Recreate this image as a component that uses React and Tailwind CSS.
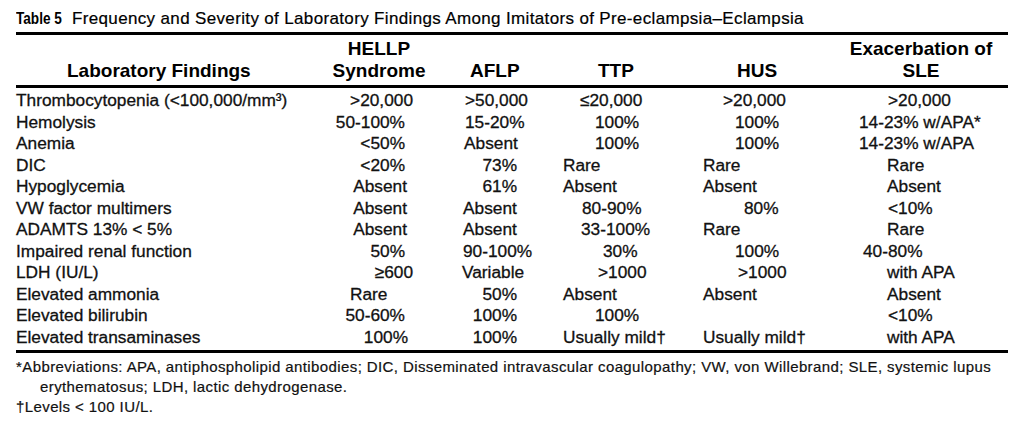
import React from 'react';

const cols = 'grid grid-cols-[314px_125px_100px_140px_150px_157px]';

const rows = [
  ['Thrombocytopenia (<100,000/mm³)',
    ['>20,000', 'text-right pr-[42px]'], ['>50,000', 'pl-[10px]'], ['≤20,000', 'pl-[25px]'], ['>20,000', 'pl-[28px]'], ['>20,000', 'pl-[43px]']],
  ['Hemolysis',
    ['50-100%', 'text-right pr-[50px]'], ['15-20%', 'pl-[10px]'], ['100%', 'pl-[40px]'], ['100%', 'pl-[40px]'], ['14-23% w/APA*', 'pl-[14px]']],
  ['Anemia',
    ['<50%', 'text-right pr-[50px]'], ['Absent', 'pl-[9px]'], ['100%', 'pl-[40px]'], ['100%', 'pl-[40px]'], ['14-23% w/APA', 'pl-[14px]']],
  ['DIC',
    ['<20%', 'text-right pr-[50px]'], ['73%', 'text-right pr-[38px]'], ['Rare', 'pl-[8px]'], ['Rare', 'pl-[8px]'], ['Rare', 'pl-[42px]']],
  ['Hypoglycemia',
    ['Absent', 'text-right pr-[48px]'], ['61%', 'text-right pr-[38px]'], ['Absent', 'pl-[8px]'], ['Absent', 'pl-[8px]'], ['Absent', 'pl-[42px]']],
  ['VW factor multimers',
    ['Absent', 'text-right pr-[48px]'], ['Absent', 'pl-[8px]'], ['80-90%', 'pl-[27px]'], ['80%', 'pl-[49px]'], ['<10%', 'pl-[43px]']],
  ['ADAMTS 13% < 5%',
    ['Absent', 'text-right pr-[48px]'], ['Absent', 'pl-[8px]'], ['33-100%', 'pl-[26px]'], ['Rare', 'pl-[8px]'], ['Rare', 'pl-[42px]']],
  ['Impaired renal function',
    ['50%', 'text-right pr-[50px]'], ['90-100%', 'pl-[8px]'], ['30%', 'pl-[48px]'], ['100%', 'pl-[40px]'], ['40-80%', 'pl-[18px]']],
  ['LDH (IU/L)',
    ['≥600', 'text-right pr-[42px]'], ['Variable', 'pl-[7px]'], ['>1000', 'pl-[43px]'], ['>1000', 'pl-[43px]'], ['with APA', 'pl-[42px]']],
  ['Elevated ammonia',
    ['Rare', 'pl-[20px]'], ['50%', 'text-right pr-[38px]'], ['Absent', 'pl-[8px]'], ['Absent', 'pl-[8px]'], ['Absent', 'pl-[42px]']],
  ['Elevated bilirubin',
    ['50-60%', 'text-right pr-[50px]'], ['100%', 'text-right pr-[38px]'], ['100%', 'pl-[40px]'], ['', ''], ['<10%', 'pl-[43px]']],
  ['Elevated transaminases',
    ['100%', 'text-right pr-[47px]'], ['100%', 'text-right pr-[38px]'], ['Usually mild†', 'pl-[8px]'], ['Usually mild†', 'pl-[8px]'], ['with APA', 'pl-[42px]']],
];

export default function App() {
  return (
    <div className="w-[1024px] h-[422px] bg-white text-black px-[16px] pt-[9px] font-['Liberation_Sans',Arial,sans-serif] overflow-hidden">
      <div className="flex items-baseline h-[20px] leading-[20px] whitespace-nowrap">
        <span className="inline-block w-[56px] shrink-0 font-bold text-[17px]">
          <span className="inline-block origin-left scale-x-[0.8]">Table 5</span>
        </span>
        <span className="text-[17px] tracking-[0.35px] [-webkit-text-stroke:0.2px_#000]">
          Frequency and Severity of Laboratory Findings Among Imitators of Pre-eclampsia–Eclampsia
        </span>
      </div>

      <div className="mt-[3px] h-[3px] bg-black" />

      <div className={`${cols} items-end pt-[3px] pb-[3px] text-[19px] font-bold leading-[22px] whitespace-nowrap`}>
        <div className="pl-[51px]">Laboratory Findings</div>
        <div className="text-center pr-[27px]">HELLP<br />Syndrome</div>
        <div className="pl-[15px]">AFLP</div>
        <div className="pl-[43px]">TTP</div>
        <div className="pl-[42px]">HUS</div>
        <div className="text-center pr-[5px]">Exacerbation of<br />SLE</div>
      </div>

      <div className="h-[3px] bg-black" />

      <div className="pt-[2px] pb-[2px] text-[17.3px] leading-[21.5px] text-[#111] whitespace-nowrap [-webkit-text-stroke:0.3px_#111]">
        {rows.map(([label, ...cells]) => (
          <div key={label} className={cols}>
            <div>{label}</div>
            {cells.map(([text, cls], i) => (
              <div key={i} className={cls}>{text}</div>
            ))}
          </div>
        ))}
      </div>

      <div className="h-[3px] bg-black" />

      <div className="pt-[4px] text-[15px] tracking-[0.4px] leading-[20px] text-[#111] whitespace-nowrap [-webkit-text-stroke:0.2px_#111]">
        <p className="pl-[24px] -indent-[24px]">
          *Abbreviations: APA, antiphospholipid antibodies; DIC, Disseminated intravascular coagulopathy; VW, von Willebrand; SLE, systemic lupus
          <br />
          erythematosus; LDH, lactic dehydrogenase.
        </p>
        <p>†Levels &lt; 100 IU/L.</p>
      </div>
    </div>
  );
}
